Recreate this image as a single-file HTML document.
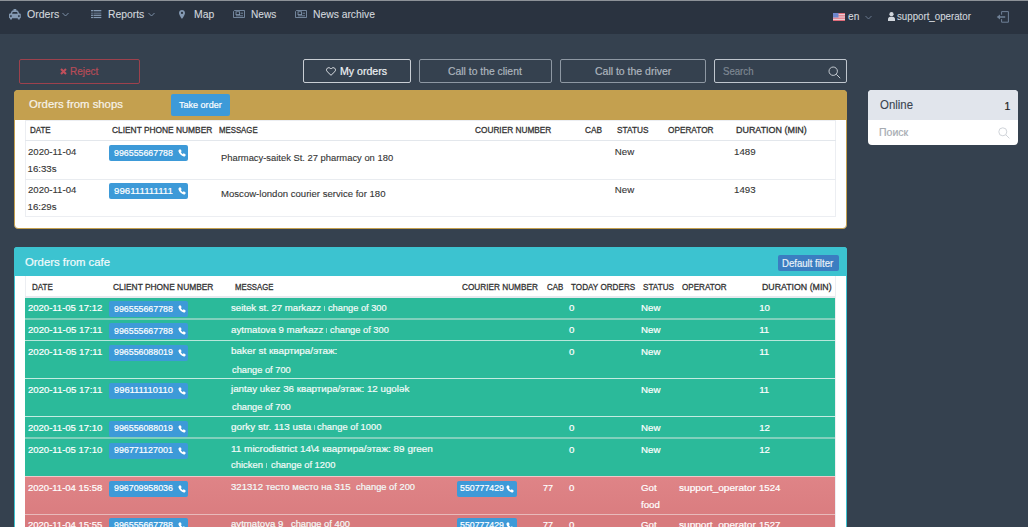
<!DOCTYPE html>
<html><head><meta charset="utf-8"><style>
html,body{margin:0;padding:0;width:1028px;height:527px;overflow:hidden;background:#35414f;}
body{position:relative;font-family:"Liberation Sans", sans-serif;}
.b{position:absolute;display:block;}
.t{position:absolute;line-height:1;white-space:pre;transform-origin:0 0;}
</style></head><body>
<div class="b" style="left:0px;top:0px;width:1028px;height:527px;background:#35414f;"></div>
<div class="b" style="left:0px;top:0px;width:1028px;height:34px;background:#2a3340;"></div>
<div class="b" style="left:0px;top:0px;width:1028px;height:1px;background:#8d9298;"></div>
<div class="b" style="left:19px;top:59px;width:121px;height:25px;background:transparent;border:1px solid #9d414d;box-sizing:border-box;border-radius:2px;"></div>
<div class="b" style="left:303px;top:59px;width:108px;height:24px;background:transparent;border:1px solid #c9ced4;box-sizing:border-box;border-radius:2px;"></div>
<div class="b" style="left:419px;top:59px;width:133px;height:24px;background:transparent;border:1px solid #8e98a3;box-sizing:border-box;border-radius:2px;"></div>
<div class="b" style="left:560px;top:59px;width:146px;height:24px;background:transparent;border:1px solid #8e98a3;box-sizing:border-box;border-radius:2px;"></div>
<div class="b" style="left:714px;top:59px;width:133px;height:24px;background:transparent;border:1px solid #bfc6ce;box-sizing:border-box;border-radius:2px;"></div>
<div class="b" style="left:14px;top:90px;width:833px;height:139px;background:#ffffff;border:1px solid #c4a04f;box-sizing:border-box;border-radius:4px;"></div>
<div class="b" style="left:14px;top:90px;width:833px;height:30px;background:#c4a04f;border-radius:4px;border-bottom-left-radius:0;border-bottom-right-radius:0;"></div>
<div class="b" style="left:171px;top:94px;width:59px;height:22px;background:#3d9ad8;border-radius:2px;"></div>
<div class="b" style="left:25px;top:120px;width:811px;height:97px;background:transparent;border:1px solid #eceef2;box-sizing:border-box;"></div>
<div class="b" style="left:25px;top:140px;width:811px;height:1px;background:#e3e7ec;"></div>
<div class="b" style="left:25px;top:179px;width:811px;height:1px;background:#e9ecf0;"></div>
<div class="b" style="left:109px;top:145px;width:79px;height:16px;background:#3d9ad8;border-radius:2px;"></div>
<svg class="b" style="left:177.5px;top:149px" width="8" height="8" viewBox="0 0 16 16"><path fill="#fff" d="M3.6 0.6c0.5-0.3 1.1-0.2 1.5 0.3l1.9 2.6c0.4 0.5 0.3 1.2-0.1 1.6l-1.2 1.1c0.8 1.8 2.2 3.3 4 4.1l1.1-1.2c0.4-0.4 1.1-0.5 1.6-0.1l2.6 1.9c0.5 0.4 0.6 1 0.3 1.5l-1 1.7c-0.5 0.9-1.6 1.3-2.6 1C6.8 14 2 9.2 0.9 4.4 0.6 3.400 1 2.300 1.900 1.800z"/></svg>
<div class="b" style="left:109px;top:183px;width:79px;height:16px;background:#3d9ad8;border-radius:2px;"></div>
<svg class="b" style="left:177.5px;top:187px" width="8" height="8" viewBox="0 0 16 16"><path fill="#fff" d="M3.6 0.6c0.5-0.3 1.1-0.2 1.5 0.3l1.9 2.6c0.4 0.5 0.3 1.2-0.1 1.6l-1.2 1.1c0.8 1.8 2.2 3.3 4 4.1l1.1-1.2c0.4-0.4 1.1-0.5 1.6-0.1l2.6 1.9c0.5 0.4 0.6 1 0.3 1.5l-1 1.7c-0.5 0.9-1.6 1.3-2.6 1C6.8 14 2 9.2 0.9 4.4 0.6 3.400 1 2.300 1.900 1.800z"/></svg>
<div class="b" style="left:868px;top:90px;width:150px;height:55px;background:#ffffff;border-radius:4px;"></div>
<div class="b" style="left:868px;top:90px;width:150px;height:30px;background:#e1e5ec;border-radius:4px;border-bottom-left-radius:0;border-bottom-right-radius:0;"></div>
<div class="b" style="left:14px;top:247px;width:833px;height:300px;background:#ffffff;border:1px solid #3cc3d0;box-sizing:border-box;border-radius:3px;"></div>
<div class="b" style="left:25px;top:276px;width:1px;height:22px;background:#eceef2;"></div>
<div class="b" style="left:835px;top:276px;width:1px;height:300px;background:#eceef2;"></div>
<div class="b" style="left:25px;top:296px;width:810px;height:2px;background:#e6e9ee;"></div>
<div class="b" style="left:14px;top:247px;width:833px;height:29px;background:#3cc3d0;border-radius:3px;border-bottom-left-radius:0;border-bottom-right-radius:0;"></div>
<div class="b" style="left:778px;top:255px;width:61px;height:16px;background:#3b7dc1;border-radius:2px;"></div>
<div class="b" style="left:25px;top:298px;width:810px;height:240px;background:#2bba9a;"></div>
<div class="b" style="left:25px;top:318px;width:810px;height:2px;background:#80d0bc;"></div>
<div class="b" style="left:25px;top:340px;width:810px;height:1px;background:#b8e7db;"></div>
<div class="b" style="left:25px;top:378px;width:810px;height:1px;background:#c5ece2;"></div>
<div class="b" style="left:25px;top:416px;width:810px;height:1px;background:#c5ece2;"></div>
<div class="b" style="left:25px;top:437px;width:810px;height:2px;background:#80d0bc;"></div>
<div class="b" style="left:25px;top:476px;width:810px;height:38px;background:#dc7f81;background:linear-gradient(#df8487,#da7d80);"></div>
<div class="b" style="left:25px;top:514px;width:810px;height:20px;background:#d87a7d;"></div>
<div class="b" style="left:25px;top:476px;width:810px;height:1px;background:#f0c9ca;"></div>
<div class="b" style="left:25px;top:514px;width:810px;height:1px;background:#e8babb;"></div>
<div class="b" style="left:109px;top:301.1px;width:79px;height:16px;background:#3d9ad8;border-radius:2px;"></div>
<svg class="b" style="left:177.5px;top:305.1px" width="8" height="8" viewBox="0 0 16 16"><path fill="#fff" d="M3.6 0.6c0.5-0.3 1.1-0.2 1.5 0.3l1.9 2.6c0.4 0.5 0.3 1.2-0.1 1.6l-1.2 1.1c0.8 1.8 2.2 3.3 4 4.1l1.1-1.2c0.4-0.4 1.1-0.5 1.6-0.1l2.6 1.9c0.5 0.4 0.6 1 0.3 1.5l-1 1.7c-0.5 0.9-1.6 1.3-2.6 1C6.8 14 2 9.2 0.9 4.4 0.6 3.400 1 2.300 1.900 1.800z"/></svg>
<div class="b" style="left:324px;top:306.1px;width:1px;height:5px;background:rgba(255,255,255,0.55);"></div>
<div class="b" style="left:109px;top:322.8px;width:79px;height:16px;background:#3d9ad8;border-radius:2px;"></div>
<svg class="b" style="left:177.5px;top:326.8px" width="8" height="8" viewBox="0 0 16 16"><path fill="#fff" d="M3.6 0.6c0.5-0.3 1.1-0.2 1.5 0.3l1.9 2.6c0.4 0.5 0.3 1.2-0.1 1.6l-1.2 1.1c0.8 1.8 2.2 3.3 4 4.1l1.1-1.2c0.4-0.4 1.1-0.5 1.6-0.1l2.6 1.9c0.5 0.4 0.6 1 0.3 1.5l-1 1.7c-0.5 0.9-1.6 1.3-2.6 1C6.8 14 2 9.2 0.9 4.4 0.6 3.400 1 2.300 1.900 1.800z"/></svg>
<div class="b" style="left:326px;top:327.8px;width:1px;height:5px;background:rgba(255,255,255,0.55);"></div>
<div class="b" style="left:109px;top:344.5px;width:79px;height:16px;background:#3d9ad8;border-radius:2px;"></div>
<svg class="b" style="left:177.5px;top:348.5px" width="8" height="8" viewBox="0 0 16 16"><path fill="#fff" d="M3.6 0.6c0.5-0.3 1.1-0.2 1.5 0.3l1.9 2.6c0.4 0.5 0.3 1.2-0.1 1.6l-1.2 1.1c0.8 1.8 2.2 3.3 4 4.1l1.1-1.2c0.4-0.4 1.1-0.5 1.6-0.1l2.6 1.9c0.5 0.4 0.6 1 0.3 1.5l-1 1.7c-0.5 0.9-1.6 1.3-2.6 1C6.8 14 2 9.2 0.9 4.4 0.6 3.400 1 2.300 1.900 1.800z"/></svg>
<div class="b" style="left:109px;top:382.5px;width:79px;height:16px;background:#3d9ad8;border-radius:2px;"></div>
<svg class="b" style="left:177.5px;top:386.5px" width="8" height="8" viewBox="0 0 16 16"><path fill="#fff" d="M3.6 0.6c0.5-0.3 1.1-0.2 1.5 0.3l1.9 2.6c0.4 0.5 0.3 1.2-0.1 1.6l-1.2 1.1c0.8 1.8 2.2 3.3 4 4.1l1.1-1.2c0.4-0.4 1.1-0.5 1.6-0.1l2.6 1.9c0.5 0.4 0.6 1 0.3 1.5l-1 1.7c-0.5 0.9-1.6 1.3-2.6 1C6.8 14 2 9.2 0.9 4.4 0.6 3.400 1 2.300 1.900 1.800z"/></svg>
<div class="b" style="left:109px;top:420.5px;width:79px;height:16px;background:#3d9ad8;border-radius:2px;"></div>
<svg class="b" style="left:177.5px;top:424.5px" width="8" height="8" viewBox="0 0 16 16"><path fill="#fff" d="M3.6 0.6c0.5-0.3 1.1-0.2 1.5 0.3l1.9 2.6c0.4 0.5 0.3 1.2-0.1 1.6l-1.2 1.1c0.8 1.8 2.2 3.3 4 4.1l1.1-1.2c0.4-0.4 1.1-0.5 1.6-0.1l2.6 1.9c0.5 0.4 0.6 1 0.3 1.5l-1 1.7c-0.5 0.9-1.6 1.3-2.6 1C6.8 14 2 9.2 0.9 4.4 0.6 3.400 1 2.300 1.900 1.800z"/></svg>
<div class="b" style="left:314px;top:425.0px;width:1px;height:5px;background:rgba(255,255,255,0.55);"></div>
<div class="b" style="left:109px;top:442.5px;width:79px;height:16px;background:#3d9ad8;border-radius:2px;"></div>
<svg class="b" style="left:177.5px;top:446.5px" width="8" height="8" viewBox="0 0 16 16"><path fill="#fff" d="M3.6 0.6c0.5-0.3 1.1-0.2 1.5 0.3l1.9 2.6c0.4 0.5 0.3 1.2-0.1 1.6l-1.2 1.1c0.8 1.8 2.2 3.3 4 4.1l1.1-1.2c0.4-0.4 1.1-0.5 1.6-0.1l2.6 1.9c0.5 0.4 0.6 1 0.3 1.5l-1 1.7c-0.5 0.9-1.6 1.3-2.6 1C6.8 14 2 9.2 0.9 4.4 0.6 3.400 1 2.300 1.900 1.800z"/></svg>
<div class="b" style="left:266px;top:462.9px;width:1px;height:5px;background:rgba(255,255,255,0.55);"></div>
<div class="b" style="left:109px;top:480.5px;width:79px;height:16px;background:#3d9ad8;border-radius:2px;"></div>
<svg class="b" style="left:177.5px;top:484.5px" width="8" height="8" viewBox="0 0 16 16"><path fill="#fff" d="M3.6 0.6c0.5-0.3 1.1-0.2 1.5 0.3l1.9 2.6c0.4 0.5 0.3 1.2-0.1 1.6l-1.2 1.1c0.8 1.8 2.2 3.3 4 4.1l1.1-1.2c0.4-0.4 1.1-0.5 1.6-0.1l2.6 1.9c0.5 0.4 0.6 1 0.3 1.5l-1 1.7c-0.5 0.9-1.6 1.3-2.6 1C6.8 14 2 9.2 0.9 4.4 0.6 3.400 1 2.300 1.900 1.800z"/></svg>
<div class="b" style="left:457px;top:480.5px;width:59.5px;height:16px;background:#3d9ad8;border-radius:2px;"></div>
<svg class="b" style="left:506px;top:484.5px" width="8" height="8" viewBox="0 0 16 16"><path fill="#fff" d="M3.6 0.6c0.5-0.3 1.1-0.2 1.5 0.3l1.9 2.6c0.4 0.5 0.3 1.2-0.1 1.6l-1.2 1.1c0.8 1.8 2.2 3.3 4 4.1l1.1-1.2c0.4-0.4 1.1-0.5 1.6-0.1l2.6 1.9c0.5 0.4 0.6 1 0.3 1.5l-1 1.7c-0.5 0.9-1.6 1.3-2.6 1C6.8 14 2 9.2 0.9 4.4 0.6 3.400 1 2.300 1.900 1.800z"/></svg>
<div class="b" style="left:109px;top:517.5px;width:79px;height:16px;background:#3d9ad8;border-radius:2px;"></div>
<svg class="b" style="left:177.5px;top:521.5px" width="8" height="8" viewBox="0 0 16 16"><path fill="#fff" d="M3.6 0.6c0.5-0.3 1.1-0.2 1.5 0.3l1.9 2.6c0.4 0.5 0.3 1.2-0.1 1.6l-1.2 1.1c0.8 1.8 2.2 3.3 4 4.1l1.1-1.2c0.4-0.4 1.1-0.5 1.6-0.1l2.6 1.9c0.5 0.4 0.6 1 0.3 1.5l-1 1.7c-0.5 0.9-1.6 1.3-2.6 1C6.8 14 2 9.2 0.9 4.4 0.6 3.400 1 2.300 1.900 1.800z"/></svg>
<div class="b" style="left:457px;top:517.5px;width:59.5px;height:16px;background:#3d9ad8;border-radius:2px;"></div>
<svg class="b" style="left:506px;top:521.5px" width="8" height="8" viewBox="0 0 16 16"><path fill="#fff" d="M3.6 0.6c0.5-0.3 1.1-0.2 1.5 0.3l1.9 2.6c0.4 0.5 0.3 1.2-0.1 1.6l-1.2 1.1c0.8 1.8 2.2 3.3 4 4.1l1.1-1.2c0.4-0.4 1.1-0.5 1.6-0.1l2.6 1.9c0.5 0.4 0.6 1 0.3 1.5l-1 1.7c-0.5 0.9-1.6 1.3-2.6 1C6.8 14 2 9.2 0.9 4.4 0.6 3.400 1 2.300 1.900 1.800z"/></svg>

<svg class="b" style="left:9px;top:9px" width="12" height="11" viewBox="0 0 12 11"><path fill="#8499b2" fill-rule="evenodd" d="M4.4 1.6V0.7Q4.4 0.1 5 0.1H6.8Q7.4 0.1 7.4 0.7V1.6H8.3Q8.9 1.6 9.2 2.2L10.2 4.6H10.8Q11.8 4.6 11.8 5.6V8.6Q11.8 9.2 11.2 9.2H10.8V9.9Q10.8 10.5 10.2 10.5H9.4Q8.8 10.5 8.8 9.9V9.2H3V9.9Q3 10.5 2.4 10.5H1.6Q1 10.5 1 9.9V9.2H0.6Q0 9.2 0 8.6V5.6Q0 4.6 1 4.6H1.6L2.6 2.2Q2.9 1.6 3.5 1.6Z M3.7 3L3.1 4.7H8.7L8.1 3Z M1.9 6.2a0.9 0.9 0 1 0 0.01 0Z M9.9 6.2a0.9 0.9 0 1 0 0.01 0Z"/></svg>
<svg class="b" style="left:91px;top:10px" width="11" height="9" viewBox="0 0 11 9"><g fill="#8499b2"><rect x="0" y="0" width="2.5" height="1.1"/><rect x="3" y="0" width="7.3" height="1.1"/><rect x="0" y="1.6" width="2.5" height="0.8" opacity="0.6"/><rect x="3" y="1.6" width="7.3" height="0.8" opacity="0.6"/><rect x="0" y="3" width="2.5" height="0.8" opacity="0.6"/><rect x="3" y="3" width="7.3" height="0.8" opacity="0.6"/><rect x="0" y="4.7" width="2.5" height="1.2"/><rect x="3" y="4.7" width="7.3" height="1.2"/><rect x="0" y="6.9" width="2.5" height="1.2"/><rect x="3" y="6.9" width="7.3" height="1.2"/></g></svg>
<svg class="b" style="left:179px;top:10px" width="6" height="9" viewBox="0 0 6 9"><path fill="#8499b2" d="M3 0C1.300 0 0 1.300 0 3c0 2 3 6 3 6s3-4 3-6C6 1.300 4.700 0 3 0z M3 1.800a1.100 1.100 0 1 1 0 2.200a1.100 1.100 0 1 1 0-2.200z" fill-rule="evenodd"/></svg>
<svg class="b" style="left:233px;top:10px" width="12" height="8" viewBox="0 0 12 8"><g fill="none" stroke="#8499b2" stroke-width="0.8"><path d="M1.4 0.5H11.5V7.5H0.5V1.4Z"/><rect x="3" y="1.8" width="3.6" height="2.8"/><path d="M7.6 3.2H10M3 5.8H10"/></g><rect x="4" y="2.6" width="1.6" height="1.2" fill="#222a34"/></svg>
<svg class="b" style="left:295px;top:10px" width="12" height="8" viewBox="0 0 12 8"><g fill="none" stroke="#8499b2" stroke-width="0.8"><path d="M1.4 0.5H11.5V7.5H0.5V1.4Z"/><rect x="3" y="1.8" width="3.6" height="2.8"/><path d="M7.6 3.2H10M3 5.8H10"/></g><rect x="4" y="2.6" width="1.6" height="1.2" fill="#222a34"/></svg>
<svg class="b" style="left:62px;top:12px" width="7" height="5" viewBox="0 0 7 5"><path d="M0.5 1l3 3 3-3" fill="none" stroke="#8499b2" stroke-width="0.9"/></svg>
<svg class="b" style="left:148px;top:12px" width="7" height="5" viewBox="0 0 7 5"><path d="M0.5 1l3 3 3-3" fill="none" stroke="#8499b2" stroke-width="0.9"/></svg>
<svg class="b" style="left:865px;top:15px" width="7" height="5" viewBox="0 0 7 5"><path d="M0.5 1l3 3 3-3" fill="none" stroke="#6f8096" stroke-width="0.9"/></svg>
<svg class="b" style="left:833px;top:13px" width="12" height="8" viewBox="0 0 12 8"><rect width="12" height="8" fill="#ecd6dc"/><g fill="#dd6a78"><rect y="0" width="12" height="1.1"/><rect y="2.3" width="12" height="1.1"/><rect y="4.6" width="12" height="1.1"/><rect y="6.9" width="12" height="1.1"/></g><rect width="5.5" height="4.5" fill="#6d86cc"/></svg>
<svg class="b" style="left:888px;top:12px" width="7" height="9" viewBox="0 0 7 9"><g fill="#d3d8de"><circle cx="3.5" cy="2.200" r="2.100"/><path d="M0 9v-2c0-1.300 1-2.300 2.300-2.300h2.400c1.300 0 2.300 1 2.300 2.300v2z"/></g></svg>
<svg class="b" style="left:996px;top:10px" width="14" height="14" viewBox="0 0 14 14"><path d="M5.6 4.7V1.6H12.4V12.2H5.6V9.1" fill="none" stroke="#6f8197" stroke-width="1"/><path d="M0.7 7L4 4.5V9.5Z M4 6.2H9.2V7.8H4Z" fill="#6f8197"/></svg>
<svg class="b" style="left:60px;top:68px" width="7" height="7" viewBox="0 0 7 7"><path d="M1 1l5 5M6 1l-5 5" stroke="#c04f5b" stroke-width="2.1"/></svg>
<svg class="b" style="left:326px;top:67px" width="10" height="9" viewBox="0 0 10 9"><path d="M5 8.300L1.200 4.600C0.200 3.600 0.300 2 1.300 1.200c1-0.800 2.400-0.600 3.200 0.300L5 2l0.500-0.500c0.800-0.900 2.200-1.100 3.200-0.300C9.700 2 9.800 3.600 8.800 4.600z" fill="none" stroke="#eef1f4" stroke-width="0.9"/></svg>
<svg class="b" style="left:827.5px;top:65.5px" width="13" height="13" viewBox="0 0 13 13"><g fill="none" stroke="#c5cbd2" stroke-width="1"><circle cx="5.200" cy="5.200" r="4.200"/><path d="M8.300 8.300l3.900 3.900"/></g></svg>
<svg class="b" style="left:998px;top:127px" width="12" height="12" viewBox="0 0 12 12"><g fill="none" stroke="#d0d4d9" stroke-width="1"><circle cx="4.800" cy="4.800" r="4"/><path d="M7.700 7.700l3.700 3.700"/></g></svg>

<span class="t" style="left:26.60px;top:8.91px;font-size:10.5px;color:#d3d8de;-webkit-text-stroke:0.1px #d3d8de;transform:scaleX(1.0064);">Orders</span>
<span class="t" style="left:107.90px;top:8.91px;font-size:10.5px;color:#d3d8de;-webkit-text-stroke:0.1px #d3d8de;transform:scaleX(0.9873);">Reports</span>
<span class="t" style="left:193.50px;top:8.91px;font-size:10.5px;color:#d3d8de;-webkit-text-stroke:0.1px #d3d8de;transform:scaleX(0.9884);">Map</span>
<span class="t" style="left:250.70px;top:8.91px;font-size:10.5px;color:#d3d8de;-webkit-text-stroke:0.1px #d3d8de;transform:scaleX(0.9632);">News</span>
<span class="t" style="left:313.00px;top:8.91px;font-size:10.5px;color:#d3d8de;-webkit-text-stroke:0.1px #d3d8de;transform:scaleX(0.9821);">News archive</span>
<span class="t" style="left:847.90px;top:11.31px;font-size:10.5px;color:#d3d8de;-webkit-text-stroke:0.1px #d3d8de;transform:scaleX(0.9668);">en</span>
<span class="t" style="left:897.00px;top:11.31px;font-size:10.5px;color:#d3d8de;-webkit-text-stroke:0.1px #d3d8de;transform:scaleX(0.9239);">support_operator</span>
<span class="t" style="left:70.00px;top:65.91px;font-size:10.5px;color:#b84c58;-webkit-text-stroke:0.2px #b84c58;transform:scaleX(0.9508);">Reject</span>
<span class="t" style="left:339.50px;top:65.91px;font-size:10.5px;color:#eef1f4;-webkit-text-stroke:0.2px #eef1f4;transform:scaleX(1.0067);">My orders</span>
<span class="t" style="left:448.40px;top:65.81px;font-size:10.5px;color:#adb5be;-webkit-text-stroke:0.2px #adb5be;transform:scaleX(0.9877);">Call to the client</span>
<span class="t" style="left:594.50px;top:65.81px;font-size:10.5px;color:#adb5be;-webkit-text-stroke:0.2px #adb5be;transform:scaleX(0.9980);">Call to the driver</span>
<span class="t" style="left:723.40px;top:65.81px;font-size:10.5px;color:#7f8893;-webkit-text-stroke:0.2px #7f8893;transform:scaleX(0.9164);">Search</span>
<span class="t" style="left:28.90px;top:98.95px;font-size:11.4px;color:#f7f3ea;-webkit-text-stroke:0.2px #f7f3ea;transform:scaleX(0.9955);">Orders from shops</span>
<span class="t" style="left:179.30px;top:100.29px;font-size:9.7px;color:#ffffff;-webkit-text-stroke:0.2px #ffffff;transform:scaleX(0.9327);">Take order</span>
<span class="t" style="left:29.80px;top:126.21px;font-size:9.2px;color:#333333;-webkit-text-stroke:0.3px #333333;transform:scaleX(0.8687);">DATE</span>
<span class="t" style="left:111.50px;top:126.21px;font-size:9.2px;color:#333333;-webkit-text-stroke:0.3px #333333;transform:scaleX(0.9109);">CLIENT PHONE NUMBER</span>
<span class="t" style="left:219.30px;top:126.21px;font-size:9.2px;color:#333333;-webkit-text-stroke:0.3px #333333;transform:scaleX(0.8492);">MESSAGE</span>
<span class="t" style="left:474.70px;top:126.21px;font-size:9.2px;color:#333333;-webkit-text-stroke:0.3px #333333;transform:scaleX(0.9005);">COURIER NUMBER</span>
<span class="t" style="left:585.00px;top:126.21px;font-size:9.2px;color:#333333;-webkit-text-stroke:0.3px #333333;transform:scaleX(0.8992);">CAB</span>
<span class="t" style="left:616.50px;top:126.21px;font-size:9.2px;color:#333333;-webkit-text-stroke:0.3px #333333;transform:scaleX(0.9028);">STATUS</span>
<span class="t" style="left:667.50px;top:126.21px;font-size:9.2px;color:#333333;-webkit-text-stroke:0.3px #333333;transform:scaleX(0.8971);">OPERATOR</span>
<span class="t" style="left:736.00px;top:126.21px;font-size:9.2px;color:#333333;-webkit-text-stroke:0.3px #333333;transform:scaleX(0.9724);">DURATION (MIN)</span>
<span class="t" style="left:27.50px;top:147.29px;font-size:9.7px;color:#353535;-webkit-text-stroke:0.12px #353535;transform:scaleX(0.9889);">2020-11-04</span>
<span class="t" style="left:27.50px;top:164.19px;font-size:9.7px;color:#353535;-webkit-text-stroke:0.12px #353535;">16:33s</span>
<span class="t" style="left:114.00px;top:147.79px;font-size:9.7px;color:#ffffff;-webkit-text-stroke:0.2px #ffffff;transform:scaleX(0.9110);">996555667788</span>
<span class="t" style="left:220.50px;top:152.59px;font-size:9.7px;color:#353535;-webkit-text-stroke:0.12px #353535;transform:scaleX(0.9685);">Pharmacy-saitek St. 27 pharmacy on 180</span>
<span class="t" style="left:614.80px;top:146.79px;font-size:9.7px;color:#353535;-webkit-text-stroke:0.12px #353535;">New</span>
<span class="t" style="left:734.00px;top:146.79px;font-size:9.7px;color:#353535;-webkit-text-stroke:0.12px #353535;">1489</span>
<span class="t" style="left:27.50px;top:185.19px;font-size:9.7px;color:#353535;-webkit-text-stroke:0.12px #353535;transform:scaleX(0.9889);">2020-11-04</span>
<span class="t" style="left:27.50px;top:201.99px;font-size:9.7px;color:#353535;-webkit-text-stroke:0.12px #353535;">16:29s</span>
<span class="t" style="left:114.00px;top:185.79px;font-size:9.7px;color:#ffffff;-webkit-text-stroke:0.2px #ffffff;transform:scaleX(0.9999);">996111111111</span>
<span class="t" style="left:220.50px;top:188.59px;font-size:9.7px;color:#353535;-webkit-text-stroke:0.12px #353535;transform:scaleX(0.9886);">Moscow-london courier service for 180</span>
<span class="t" style="left:614.80px;top:184.79px;font-size:9.7px;color:#353535;-webkit-text-stroke:0.12px #353535;">New</span>
<span class="t" style="left:734.00px;top:184.79px;font-size:9.7px;color:#353535;-webkit-text-stroke:0.12px #353535;">1493</span>
<span class="t" style="left:880.00px;top:99.04px;font-size:12px;color:#3a4450;-webkit-text-stroke:0.1px #3a4450;transform:scaleX(0.9514);">Online</span>
<span class="t" style="left:1004.60px;top:100.91px;font-size:10.5px;color:#222222;-webkit-text-stroke:0.2px #222222;">1</span>
<span class="t" style="left:878.80px;top:127.11px;font-size:10.5px;color:#a6abb1;-webkit-text-stroke:0.2px #a6abb1;transform:scaleX(0.9997);">Поиск</span>
<span class="t" style="left:25.40px;top:256.65px;font-size:11.4px;color:#f4fbfc;-webkit-text-stroke:0.2px #f4fbfc;transform:scaleX(0.9947);">Orders from cafe</span>
<span class="t" style="left:781.60px;top:257.51px;font-size:10.5px;color:#e9f1f8;-webkit-text-stroke:0.2px #e9f1f8;transform:scaleX(0.9138);">Default filter</span>
<span class="t" style="left:31.70px;top:282.71px;font-size:9.2px;color:#333333;-webkit-text-stroke:0.3px #333333;transform:scaleX(0.8729);">DATE</span>
<span class="t" style="left:113.40px;top:282.71px;font-size:9.2px;color:#333333;-webkit-text-stroke:0.3px #333333;transform:scaleX(0.9118);">CLIENT PHONE NUMBER</span>
<span class="t" style="left:235.00px;top:282.71px;font-size:9.2px;color:#333333;-webkit-text-stroke:0.3px #333333;transform:scaleX(0.8470);">MESSAGE</span>
<span class="t" style="left:461.70px;top:282.71px;font-size:9.2px;color:#333333;-webkit-text-stroke:0.3px #333333;transform:scaleX(0.8957);">COURIER NUMBER</span>
<span class="t" style="left:547.40px;top:282.71px;font-size:9.2px;color:#333333;-webkit-text-stroke:0.3px #333333;transform:scaleX(0.8621);">CAB</span>
<span class="t" style="left:571.40px;top:282.71px;font-size:9.2px;color:#333333;-webkit-text-stroke:0.3px #333333;transform:scaleX(0.8855);">TODAY ORDERS</span>
<span class="t" style="left:643.00px;top:282.71px;font-size:9.2px;color:#333333;-webkit-text-stroke:0.3px #333333;transform:scaleX(0.8885);">STATUS</span>
<span class="t" style="left:681.80px;top:282.71px;font-size:9.2px;color:#333333;-webkit-text-stroke:0.3px #333333;transform:scaleX(0.8813);">OPERATOR</span>
<span class="t" style="left:761.60px;top:282.71px;font-size:9.2px;color:#333333;-webkit-text-stroke:0.3px #333333;transform:scaleX(0.9559);">DURATION (MIN)</span>
<span class="t" style="left:27.50px;top:303.39px;font-size:9.7px;color:#ffffff;-webkit-text-stroke:0.2px #ffffff;transform:scaleX(0.9805);">2020-11-05 17:12</span>
<span class="t" style="left:114.00px;top:303.89px;font-size:9.7px;color:#ffffff;-webkit-text-stroke:0.2px #ffffff;transform:scaleX(0.9110);">996555667788</span>
<span class="t" style="left:230.70px;top:303.39px;font-size:9.7px;color:#f3fbf9;-webkit-text-stroke:0.2px #f3fbf9;transform:scaleX(0.9901);">seitek st. 27 markazz</span>
<span class="t" style="left:327.90px;top:303.39px;font-size:9.7px;color:#f3fbf9;-webkit-text-stroke:0.2px #f3fbf9;transform:scaleX(0.9541);">change of 300</span>
<span class="t" style="left:569.00px;top:303.39px;font-size:9.7px;color:#ffffff;-webkit-text-stroke:0.2px #ffffff;">0</span>
<span class="t" style="left:641.00px;top:303.39px;font-size:9.7px;color:#ffffff;-webkit-text-stroke:0.2px #ffffff;">New</span>
<span class="t" style="left:759.20px;top:303.39px;font-size:9.7px;color:#ffffff;-webkit-text-stroke:0.2px #ffffff;">10</span>
<span class="t" style="left:27.50px;top:325.09px;font-size:9.7px;color:#ffffff;-webkit-text-stroke:0.2px #ffffff;transform:scaleX(0.9898);">2020-11-05 17:11</span>
<span class="t" style="left:114.00px;top:325.59px;font-size:9.7px;color:#ffffff;-webkit-text-stroke:0.2px #ffffff;transform:scaleX(0.9110);">996555667788</span>
<span class="t" style="left:230.70px;top:325.09px;font-size:9.7px;color:#f3fbf9;-webkit-text-stroke:0.2px #f3fbf9;transform:scaleX(1.0024);">aytmatova 9 markazz</span>
<span class="t" style="left:329.60px;top:325.09px;font-size:9.7px;color:#f3fbf9;-webkit-text-stroke:0.2px #f3fbf9;transform:scaleX(0.9573);">change of 300</span>
<span class="t" style="left:569.00px;top:325.09px;font-size:9.7px;color:#ffffff;-webkit-text-stroke:0.2px #ffffff;">0</span>
<span class="t" style="left:641.00px;top:325.09px;font-size:9.7px;color:#ffffff;-webkit-text-stroke:0.2px #ffffff;">New</span>
<span class="t" style="left:759.20px;top:325.09px;font-size:9.7px;color:#ffffff;-webkit-text-stroke:0.2px #ffffff;">11</span>
<span class="t" style="left:27.50px;top:346.79px;font-size:9.7px;color:#ffffff;-webkit-text-stroke:0.2px #ffffff;transform:scaleX(0.9898);">2020-11-05 17:11</span>
<span class="t" style="left:114.00px;top:347.29px;font-size:9.7px;color:#ffffff;-webkit-text-stroke:0.2px #ffffff;transform:scaleX(0.9110);">996556088019</span>
<span class="t" style="left:230.70px;top:346.09px;font-size:9.7px;color:#f3fbf9;-webkit-text-stroke:0.2px #f3fbf9;transform:scaleX(1.0227);">baker st квартира/этаж:</span>
<span class="t" style="left:232.30px;top:364.59px;font-size:9.7px;color:#f3fbf9;-webkit-text-stroke:0.2px #f3fbf9;transform:scaleX(0.9557);">change of 700</span>
<span class="t" style="left:569.00px;top:346.79px;font-size:9.7px;color:#ffffff;-webkit-text-stroke:0.2px #ffffff;">0</span>
<span class="t" style="left:641.00px;top:346.79px;font-size:9.7px;color:#ffffff;-webkit-text-stroke:0.2px #ffffff;">New</span>
<span class="t" style="left:759.20px;top:346.79px;font-size:9.7px;color:#ffffff;-webkit-text-stroke:0.2px #ffffff;">11</span>
<span class="t" style="left:27.50px;top:384.79px;font-size:9.7px;color:#ffffff;-webkit-text-stroke:0.2px #ffffff;transform:scaleX(0.9898);">2020-11-05 17:11</span>
<span class="t" style="left:114.00px;top:385.29px;font-size:9.7px;color:#ffffff;-webkit-text-stroke:0.2px #ffffff;transform:scaleX(0.9646);">996111110110</span>
<span class="t" style="left:230.70px;top:384.29px;font-size:9.7px;color:#f3fbf9;-webkit-text-stroke:0.2px #f3fbf9;transform:scaleX(1.0094);">jantay ukez 36 квартира/этаж: 12 ugolək</span>
<span class="t" style="left:232.30px;top:401.59px;font-size:9.7px;color:#f3fbf9;-webkit-text-stroke:0.2px #f3fbf9;transform:scaleX(0.9557);">change of 700</span>
<span class="t" style="left:641.00px;top:384.79px;font-size:9.7px;color:#ffffff;-webkit-text-stroke:0.2px #ffffff;">New</span>
<span class="t" style="left:759.20px;top:384.79px;font-size:9.7px;color:#ffffff;-webkit-text-stroke:0.2px #ffffff;">11</span>
<span class="t" style="left:27.50px;top:422.79px;font-size:9.7px;color:#ffffff;-webkit-text-stroke:0.2px #ffffff;transform:scaleX(0.9805);">2020-11-05 17:10</span>
<span class="t" style="left:114.00px;top:423.29px;font-size:9.7px;color:#ffffff;-webkit-text-stroke:0.2px #ffffff;transform:scaleX(0.9110);">996556088019</span>
<span class="t" style="left:230.70px;top:422.29px;font-size:9.7px;color:#f3fbf9;-webkit-text-stroke:0.2px #f3fbf9;transform:scaleX(1.0225);">gorky str. 113 usta</span>
<span class="t" style="left:317.40px;top:422.29px;font-size:9.7px;color:#f3fbf9;-webkit-text-stroke:0.2px #f3fbf9;transform:scaleX(0.9641);">change of 1000</span>
<span class="t" style="left:569.00px;top:422.79px;font-size:9.7px;color:#ffffff;-webkit-text-stroke:0.2px #ffffff;">0</span>
<span class="t" style="left:641.00px;top:422.79px;font-size:9.7px;color:#ffffff;-webkit-text-stroke:0.2px #ffffff;">New</span>
<span class="t" style="left:759.20px;top:422.79px;font-size:9.7px;color:#ffffff;-webkit-text-stroke:0.2px #ffffff;">12</span>
<span class="t" style="left:27.50px;top:444.79px;font-size:9.7px;color:#ffffff;-webkit-text-stroke:0.2px #ffffff;transform:scaleX(0.9805);">2020-11-05 17:10</span>
<span class="t" style="left:114.00px;top:445.29px;font-size:9.7px;color:#ffffff;-webkit-text-stroke:0.2px #ffffff;transform:scaleX(0.9212);">996771127001</span>
<span class="t" style="left:230.70px;top:443.79px;font-size:9.7px;color:#f3fbf9;-webkit-text-stroke:0.2px #f3fbf9;transform:scaleX(1.0282);">11 microdistrict 14\4 квартира/этаж: 89 green</span>
<span class="t" style="left:230.70px;top:460.19px;font-size:9.7px;color:#f3fbf9;-webkit-text-stroke:0.2px #f3fbf9;transform:scaleX(0.9738);">chicken</span>
<span class="t" style="left:270.60px;top:460.19px;font-size:9.7px;color:#f3fbf9;-webkit-text-stroke:0.2px #f3fbf9;transform:scaleX(0.9641);">change of 1200</span>
<span class="t" style="left:569.00px;top:444.79px;font-size:9.7px;color:#ffffff;-webkit-text-stroke:0.2px #ffffff;">0</span>
<span class="t" style="left:641.00px;top:444.79px;font-size:9.7px;color:#ffffff;-webkit-text-stroke:0.2px #ffffff;">New</span>
<span class="t" style="left:759.20px;top:444.79px;font-size:9.7px;color:#ffffff;-webkit-text-stroke:0.2px #ffffff;">12</span>
<span class="t" style="left:27.50px;top:482.79px;font-size:9.7px;color:#ffffff;-webkit-text-stroke:0.2px #ffffff;transform:scaleX(0.9805);">2020-11-04 15:58</span>
<span class="t" style="left:114.00px;top:483.29px;font-size:9.7px;color:#ffffff;-webkit-text-stroke:0.2px #ffffff;transform:scaleX(0.9110);">996709958036</span>
<span class="t" style="left:230.70px;top:482.29px;font-size:9.7px;color:#f3fbf9;-webkit-text-stroke:0.2px #f3fbf9;transform:scaleX(0.9893);">321312 тесто место на 315</span>
<span class="t" style="left:356.00px;top:482.29px;font-size:9.7px;color:#f3fbf9;-webkit-text-stroke:0.2px #f3fbf9;transform:scaleX(0.9606);">change of 200</span>
<span class="t" style="left:569.00px;top:482.79px;font-size:9.7px;color:#ffffff;-webkit-text-stroke:0.2px #ffffff;">0</span>
<span class="t" style="left:641.00px;top:482.79px;font-size:9.7px;color:#ffffff;-webkit-text-stroke:0.2px #ffffff;">Got</span>
<span class="t" style="left:641.00px;top:499.79px;font-size:9.7px;color:#ffffff;-webkit-text-stroke:0.2px #ffffff;">food</span>
<span class="t" style="left:679.00px;top:482.79px;font-size:9.7px;color:#ffffff;-webkit-text-stroke:0.2px #ffffff;transform:scaleX(1.0407);">support_operator</span>
<span class="t" style="left:758.60px;top:482.79px;font-size:9.7px;color:#ffffff;-webkit-text-stroke:0.2px #ffffff;transform:scaleX(0.9925);">1524</span>
<span class="t" style="left:543.00px;top:482.79px;font-size:9.7px;color:#ffffff;-webkit-text-stroke:0.2px #ffffff;transform:scaleX(0.9275);">77</span>
<span class="t" style="left:459.50px;top:483.29px;font-size:9.7px;color:#ffffff;-webkit-text-stroke:0.2px #ffffff;transform:scaleX(0.9072);">550777429</span>
<span class="t" style="left:27.50px;top:519.79px;font-size:9.7px;color:#ffffff;-webkit-text-stroke:0.2px #ffffff;transform:scaleX(0.9805);">2020-11-04 15:55</span>
<span class="t" style="left:114.00px;top:520.29px;font-size:9.7px;color:#ffffff;-webkit-text-stroke:0.2px #ffffff;transform:scaleX(0.9110);">996555667788</span>
<span class="t" style="left:230.70px;top:519.29px;font-size:9.7px;color:#f3fbf9;-webkit-text-stroke:0.2px #f3fbf9;transform:scaleX(0.9909);">aytmatova 9</span>
<span class="t" style="left:291.00px;top:519.29px;font-size:9.7px;color:#f3fbf9;-webkit-text-stroke:0.2px #f3fbf9;transform:scaleX(0.9606);">change of 400</span>
<span class="t" style="left:569.00px;top:519.79px;font-size:9.7px;color:#ffffff;-webkit-text-stroke:0.2px #ffffff;">0</span>
<span class="t" style="left:641.00px;top:519.79px;font-size:9.7px;color:#ffffff;-webkit-text-stroke:0.2px #ffffff;">Got</span>
<span class="t" style="left:641.00px;top:536.79px;font-size:9.7px;color:#ffffff;-webkit-text-stroke:0.2px #ffffff;">food</span>
<span class="t" style="left:679.00px;top:519.79px;font-size:9.7px;color:#ffffff;-webkit-text-stroke:0.2px #ffffff;transform:scaleX(1.0407);">support_operator</span>
<span class="t" style="left:758.60px;top:519.79px;font-size:9.7px;color:#ffffff;-webkit-text-stroke:0.2px #ffffff;transform:scaleX(0.9925);">1527</span>
<span class="t" style="left:543.00px;top:519.79px;font-size:9.7px;color:#ffffff;-webkit-text-stroke:0.2px #ffffff;transform:scaleX(0.9275);">77</span>
<span class="t" style="left:459.50px;top:520.29px;font-size:9.7px;color:#ffffff;-webkit-text-stroke:0.2px #ffffff;transform:scaleX(0.9072);">550777429</span>
</body></html>
